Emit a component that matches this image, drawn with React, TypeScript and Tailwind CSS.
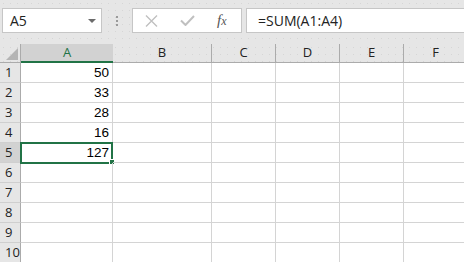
const cols = [
  { label: 'A', w: 'w-[92px]' },
  { label: 'B', w: 'w-[99px]' },
  { label: 'C', w: 'w-[64px]' },
  { label: 'D', w: 'w-[64px]' },
  { label: 'E', w: 'w-[64px]' },
  { label: 'F', w: 'w-[64px]' },
]

const values: Record<number, string> = { 1: '50', 2: '33', 3: '28', 4: '16', 5: '127' }
const rows = [1, 2, 3, 4, 5, 6, 7, 8, 9, 10]

const dots =
  'bg-[#e6e6e6] bg-[radial-gradient(circle,#d6d6d6_0.5px,transparent_0.7px)] bg-[size:7px_7px]'

function Toolbar() {
  return (
    <div className={`flex h-[44px] shrink-0 items-start pt-[8px] ${dots}`}>
      {/* name box */}
      <div className="ml-[2px] flex h-[25px] w-[100px] items-center justify-between border border-[#c6c6c6] bg-white pl-[7px] pr-[5px] text-[14px] text-[#222]">
        <span>A5</span>
        <svg width="8" height="4" viewBox="0 0 8 4">
          <path d="M0 0h8L4 4z" fill="#6b6b6b" />
        </svg>
      </div>
      {/* grip */}
      <div className="ml-[14px] flex h-[25px] flex-col items-center justify-center gap-[2px]">
        <span className="h-[2px] w-[2px] bg-[#9a9a9a]" />
        <span className="h-[2px] w-[2px] bg-[#9a9a9a]" />
        <span className="h-[2px] w-[2px] bg-[#9a9a9a]" />
      </div>
      {/* cancel / enter / fx */}
      <div className="ml-[14px] flex h-[25px] w-[110px] items-center border border-[#c6c6c6] bg-white pl-[12px]">
        <svg width="13" height="12" viewBox="0 0 13 12">
          <path d="M1 0.5l11 11M12 0.5l-11 11" stroke="#c0c0c0" strokeWidth="1.4" />
        </svg>
        <svg className="ml-[22px]" width="15" height="11" viewBox="0 0 15 11">
          <path d="M1 5.5l4.5 4.5L14 1" stroke="#c0c0c0" strokeWidth="2" fill="none" />
        </svg>
        <span className="ml-[22px] font-['Liberation_Serif'] text-[15px] italic leading-none text-[#555]">
          f<span className="text-[12px]">x</span>
        </span>
      </div>
      {/* formula */}
      <div className="ml-[4px] flex h-[25px] flex-1 items-center border border-r-0 border-[#c6c6c6] bg-white pl-[11px] text-[14px] text-[#222]">
        =SUM(A1:A4)
      </div>
    </div>
  )
}

export default function App() {
  return (
    <div className="flex h-[262px] w-[464px] flex-col overflow-hidden bg-white font-['Open_Sans','Liberation_Sans',sans-serif]">
      <Toolbar />
      {/* column headers */}
      <div className={`flex h-[19px] shrink-0 ${dots}`}>
        <div className="relative w-[21px] shrink-0 border-r border-b border-[#ababab]">
          <svg className="absolute left-[6px] top-[4px]" width="12" height="12" viewBox="0 0 12 12">
            <path d="M12 0V12H0z" fill="#b4b4b4" />
          </svg>
        </div>
        {cols.map((c) =>
          c.label === 'A' ? (
            <div
              key={c.label}
              className={`${c.w} flex shrink-0 items-center justify-center border-b-2 border-[#217346] bg-[#d2d2d2] text-[13px] text-[#217346]`}
            >
              {c.label}
            </div>
          ) : (
            <div
              key={c.label}
              className={`${c.w} flex shrink-0 items-center justify-center border-r border-b border-[#ababab] text-[13px] text-[#222]`}
            >
              {c.label}
            </div>
          ),
        )}
      </div>
      {/* body */}
      {rows.map((r) => (
        <div key={r} className="flex h-[20px] shrink-0">
          <div
            className={`flex w-[21px] shrink-0 items-center border-r border-b border-r-[#ababab] border-b-[#cfcfcf] pl-[5px] text-[13px] text-[#222] ${
              r === 5 ? 'bg-[#d2d2d2] text-[#1e4d33]' : 'bg-[#e6e6e6]'
            }`}
          >
            {r}
          </div>
          {cols.map((c) => (
            <div
              key={c.label}
              className={`${c.w} relative flex shrink-0 items-center justify-end border-r border-b border-[#d4d4d4] pr-[3px] pt-[1px] font-['Liberation_Sans'] text-[13.5px] text-black`}
            >
              {c.label === 'A' ? values[r] : null}
              {c.label === 'A' && r === 5 && (
                <>
                  <div className="absolute -left-[1px] -top-[1px] h-[22px] w-[93px] border-2 border-[#217346]" />
                  <div className="absolute -right-[3px] -bottom-[3px] h-[6px] w-[6px] border border-white bg-[#217346]" />
                </>
              )}
            </div>
          ))}
        </div>
      ))}
    </div>
  )
}
